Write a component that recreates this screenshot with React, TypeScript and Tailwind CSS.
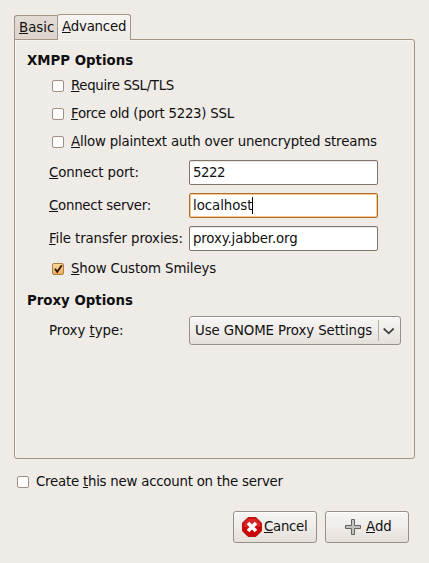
import type { ReactNode } from "react";

function Mnemonic({ children }: { children: ReactNode }) {
  return <span className="underline decoration-1 underline-offset-1 [text-decoration-skip-ink:none]">{children}</span>;
}

function Box({ checked = false }: { checked?: boolean }) {
  return checked ? (
    <span className="h-3 w-3 shrink-0 rounded-[2px] border border-[#a97c45] bg-gradient-to-b from-[#ffd797] to-[#f2ad55]">
      <svg className="-mt-px -ml-px block" width="12" height="12" viewBox="0 0 12 12" fill="none">
        <path d="M3 5.8L5.2 8.8L9.8 2.2" stroke="#2b1c0c" strokeWidth="1.9" />
      </svg>
    </span>
  ) : (
    <span className="h-3 w-3 shrink-0 rounded-[2px] border border-[#9d8f84] bg-white" />
  );
}

function CheckRow({ children, tracking, checked = false }: { children: ReactNode; tracking: string; checked?: boolean }) {
  return (
    <label className="flex h-7 items-center gap-[7px] pl-[37px]">
      <Box checked={checked} />
      <span className={tracking}>{children}</span>
    </label>
  );
}

interface FieldProps {
  label: ReactNode;
  value: string;
  labelTracking: string;
  valueTracking: string;
  focused?: boolean;
}

function Field({ label, value, labelTracking, valueTracking, focused = false }: FieldProps) {
  return (
    <div className="flex h-[25px] items-center pl-[34px]">
      <span className={`w-[140px] shrink-0 ${labelTracking}`}>{label}</span>
      <div
        className={
          focused
            ? "flex h-[25px] w-[189px] items-center rounded-[2px] border border-[#ad6d2e] bg-white pl-[3px] shadow-[inset_0_0_0_1px_#f8c98c]"
            : "flex h-[25px] w-[189px] items-center rounded-[2px] border border-[#82766c] bg-white pl-[3px] shadow-[inset_0_1px_0_#e9e6e2]"
        }
      >
        <span className={valueTracking}>{value}</span>
        {focused && <span className="h-[17px] w-px bg-black" />}
      </div>
    </div>
  );
}

export default function App() {
  return (
    <div className="flex h-[563px] w-[429px] flex-col bg-[#efebe7] pt-3.5 pl-3.5 font-['DejaVu_Sans',sans-serif] text-[13.33px] leading-4 whitespace-nowrap text-[#101010]">
      <div className="relative z-10 flex h-[26px] items-end">
        <div className="flex h-[25px] w-[43px] items-center rounded-tl-[3px] border border-r-0 border-[#a49585] bg-gradient-to-b from-[#e2dbd4] to-[#dcd4cd] pl-1">
          <span><Mnemonic>B</Mnemonic>asic</span>
        </div>
        <div className="flex h-[26px] w-[74px] items-center rounded-t-[3px] border border-b-0 border-[#a49585] bg-gradient-to-b from-[#f7f5f3] to-[#efebe7] pb-px pl-1">
          <span className="tracking-[-0.2px]"><Mnemonic>A</Mnemonic>dvanced</span>
        </div>
      </div>
      <div className="-mt-px h-[420px] w-[401px] rounded-[3px] rounded-tl-none border border-[#a49585] shadow-[inset_1px_1px_0_#f8f6f4]">
        <div className="flex h-8 items-end pl-3">
          <div className="h-[19px] font-bold">XMPP Options</div>
        </div>
        <CheckRow tracking="tracking-[-0.34px]"><Mnemonic>R</Mnemonic>equire SSL/TLS</CheckRow>
        <CheckRow tracking="tracking-[-0.26px]"><Mnemonic>F</Mnemonic>orce old (port 5223) SSL</CheckRow>
        <CheckRow tracking="tracking-[-0.18px]"><Mnemonic>A</Mnemonic>llow plaintext auth over unencrypted streams</CheckRow>
        <div className="mt-1 flex flex-col gap-2">
          <Field label={<><Mnemonic>C</Mnemonic>onnect port:</>} value="5222" labelTracking="tracking-[-0.1px]" valueTracking="tracking-[-0.5px]" />
          <Field label={<><Mnemonic>C</Mnemonic>onnect server:</>} value="localhost" labelTracking="tracking-[-0.25px]" valueTracking="tracking-[-0.05px]" focused />
          <Field label={<><Mnemonic>F</Mnemonic>ile transfer proxies:</>} value="proxy.jabber.org" labelTracking="tracking-[-0.1px]" valueTracking="tracking-[-0.15px]" />
        </div>
        <div className="mt-1">
          <CheckRow tracking="tracking-[-0.12px]" checked><Mnemonic>S</Mnemonic>how Custom Smileys</CheckRow>
        </div>
        <div className="mt-[10px] h-[23px] pl-3 font-bold">Proxy Options</div>
        <div className="flex h-[29px] items-center pl-[34px]">
          <span className="w-[140px] shrink-0 tracking-[-0.05px]">Proxy <Mnemonic>t</Mnemonic>ype:</span>
          <button className="flex h-[29px] w-[212px] shrink-0 items-center rounded-[3px] border border-[#97908a] bg-gradient-to-b from-[#f7f6f4] via-[#efece9] to-[#e5dfd9] pl-[5px] shadow-[inset_0_1px_0_#ffffff]">
            <span className="w-[183px] text-left tracking-[-0.1px]">Use GNOME Proxy Settings</span>
            <span className="h-[21px] w-px bg-[#b4aca5]" />
            <svg className="ml-[4px]" width="12" height="8" viewBox="0 0 12 8" fill="none">
              <path d="M.7 1.5L5.7 6.3L10.7 1.5" stroke="#444" strokeWidth="1.8" />
            </svg>
          </button>
        </div>
      </div>
      <label className="mt-[15px] flex h-4 items-center gap-[7px] pl-[3px]">
        <Box />
        <span className="tracking-[-0.23px]">Create <Mnemonic>t</Mnemonic>his new account on the server</span>
      </label>
      <div className="mt-[21px] flex gap-2 pl-[219px]">
        <button className="flex h-8 w-[84px] items-center rounded-[3px] border border-[#97908a] bg-gradient-to-b from-[#f7f6f4] via-[#efece9] to-[#e5dfd9] pl-2 shadow-[inset_0_1px_0_#ffffff]">
          <svg className="mr-[2px] shrink-0" width="20" height="20" viewBox="0 0 20 20">
            <path d="M6.1.5h7.8l5.6 5.6v7.8l-5.6 5.6H6.1L.5 13.9V6.1z" fill="#cc0000" stroke="#b51313" />
            <path d="M6.5 1.5h7l5 5v3.2c-5-1-11 1-17 .3V6.5z" fill="#e23b3b" opacity=".65" />
            <path d="M6 6l8 8M14 6l-8 8" stroke="#fff" strokeWidth="3.6" />
          </svg>
          <span className="tracking-[-0.3px]"><Mnemonic>C</Mnemonic>ancel</span>
        </button>
        <button className="flex h-8 w-[84px] items-center rounded-[3px] border border-[#97908a] bg-gradient-to-b from-[#f7f6f4] via-[#efece9] to-[#e5dfd9] pl-[19px] shadow-[inset_0_1px_0_#ffffff]">
          <svg className="mr-[5px] shrink-0" width="16" height="16" viewBox="0 0 16 16">
            <path d="M6.5.5h3v6h6v3h-6v6h-3v-6h-6v-3h6z" fill="#c2c4bf" stroke="#61645e" />
          </svg>
          <span><Mnemonic>A</Mnemonic>dd</span>
        </button>
      </div>
    </div>
  );
}
